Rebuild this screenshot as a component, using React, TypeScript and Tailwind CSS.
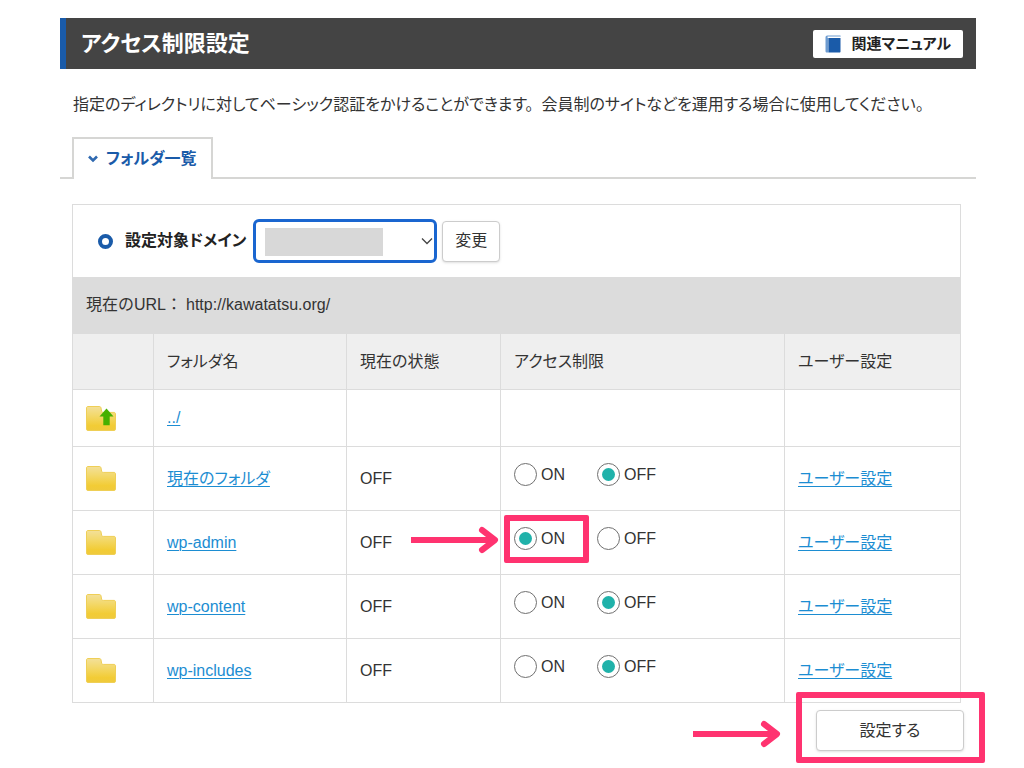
import { type FormEvent, type ReactNode, useState } from "react";
import clsx from "clsx";

type Access = "ON" | "OFF";

type Folder = {
  id: string;
  name: string;
  access: Access;
  highlighted?: boolean;
};

const folders: Folder[] = [
  { id: "current", name: "現在のフォルダ", access: "OFF" },
  { id: "wp-admin", name: "wp-admin", access: "ON", highlighted: true },
  { id: "wp-content", name: "wp-content", access: "OFF" },
  { id: "wp-includes", name: "wp-includes", access: "OFF" }
];

function FolderIcon({ up = false }: { up?: boolean }) {
  return (
    <svg viewBox="0 0 30 25" className="block h-[25px] w-[30px]" aria-hidden="true">
      <defs>
        <linearGradient id="folder-fill" x1="0" y1="0" x2="0" y2="1">
          <stop offset="0" stopColor="#f3e09a" />
          <stop offset="0.35" stopColor="#f3d96e" />
          <stop offset="0.8" stopColor="#f2cc35" />
          <stop offset="1" stopColor="#efca3c" />
        </linearGradient>
      </defs>
      <path
        d="M0.5 2C0.5 1 1 0.5 2 0.5H13.2C14.4 0.5 14.8 1 15 2L15.6 5C15.8 6 16.2 6.4 17.2 6.4H28C29 6.4 29.5 7 29.5 8V23C29.5 24 29 24.5 28 24.5H2C1 24.5 0.5 24 0.5 23Z"
        fill="url(#folder-fill)"
        stroke="#efcf56"
        strokeWidth="1"
      />
      {up ? <path d="M20.5 2.5L27.5 10.5H23.7V19.2H17.3V10.5H13.5Z" fill="#46b000" /> : null}
    </svg>
  );
}

function BookIcon() {
  return (
    <svg viewBox="0 0 16 18" className="h-[18px] w-4" aria-hidden="true">
      <path d="M2.5 0.5H15.5V2H3.2V17.5H2C1 17.5 0.5 17 0.5 16V2.5C0.5 1.2 1.2 0.5 2.5 0.5Z" fill="#6d9bd0" />
      <path d="M2.6 1.5H15.5V3H2.6Z" fill="#fff" />
      <path d="M3.4 3H15.5V16.5C15.5 17.2 15.2 17.5 14.5 17.5H3.4Z" fill="#1a5ba9" />
    </svg>
  );
}

function Arrow({ className }: { className?: string }) {
  return (
    <svg
      viewBox="0 0 88 28"
      className={clsx("pointer-events-none absolute h-7 w-[88px]", className)}
      fill="none"
      stroke="#ff3370"
      strokeWidth="6"
      strokeLinejoin="round"
      aria-hidden="true"
    >
      <path d="M0 14H82" />
      <path d="M71 4L84 14L71 24" strokeLinecap="round" />
    </svg>
  );
}

function Frame({ className }: { className?: string }) {
  return (
    <span
      className={clsx("pointer-events-none absolute rounded-xs border-6 border-[#ff3370]", className)}
    />
  );
}

function TextLink({ children }: { children: ReactNode }) {
  return (
    <a href="#" className="text-[#1c8dd2] underline decoration-1 underline-offset-2">
      {children}
    </a>
  );
}

type AccessRadioProps = {
  folderId: string;
  value: Access;
  checked: boolean;
  onChange: (value: Access) => void;
};

function AccessRadio({ folderId, value, checked, onChange }: AccessRadioProps) {
  return (
    <label className="flex items-center gap-1">
      <input
        type="radio"
        name={folderId}
        value={value}
        checked={checked}
        onChange={() => onChange(value)}
        className="size-[23px] appearance-none rounded-full border border-[#707070] bg-white bg-clip-content p-1 checked:bg-[#20b2aa]"
      />
      {value}
    </label>
  );
}

const cell = "border border-[#dcdcdc] px-[13px] text-left font-normal";

export default function App() {
  const [access, setAccess] = useState<Record<string, Access>>(
    Object.fromEntries(folders.map((folder) => [folder.id, folder.access]))
  );

  function handleSubmit(event: FormEvent<HTMLFormElement>) {
    event.preventDefault();
  }

  return (
    <main className="bg-white pt-[18px] pr-12 pb-4 pl-[60px] font-['Liberation_Sans','Noto_Sans_CJK_JP',sans-serif] text-base leading-6 text-[#333] [font-feature-settings:'palt']">
      <header className="flex h-[51px] items-center justify-between border-l-6 border-[#1a5ba9] bg-[#444] pr-[13px] pl-[15px]">
        <h1 className="text-[22px] font-bold text-white">アクセス制限設定</h1>
        <a
          href="#"
          className="flex h-7 items-center gap-[10px] rounded-xs bg-white px-3 text-[15px] font-bold text-[#222]"
        >
          <BookIcon />
          関連マニュアル
        </a>
      </header>

      <p className="mt-6 ml-[13px]">
        <span className="mr-2">指定のディレクトリに対してベーシック認証をかけることができます。</span>
        <span>会員制のサイトなどを運用する場合に使用してください。</span>
      </p>

      <div className="mt-5 flex h-[42px]">
        <div className="w-3 border-b-2 border-[#d6d6d4]" />
        <button
          type="button"
          className="flex items-center gap-2 border-2 border-b-0 border-[#d6d6d4] px-[14px] font-bold text-[#1a5ba9]"
        >
          <svg viewBox="0 0 10 8" className="h-2 w-[10px]" fill="none" aria-hidden="true">
            <path d="M1 1.5L5 5.5L9 1.5" stroke="#2f69b0" strokeWidth="2.6" />
          </svg>
          フォルダ一覧
        </button>
        <div className="flex-1 border-b-2 border-[#d6d6d4]" />
      </div>

      <form onSubmit={handleSubmit}>
        <div className="mt-[25px] mr-[15px] ml-3">
          <div className="flex h-[73px] items-center border border-b-0 border-[#dcdcdc] pl-[25px]">
            <span className="mr-3 size-[15px] rounded-full border-4 border-[#1a5ba9]" />
            <label htmlFor="domain" className="mr-[7px] font-bold text-[#222]">
              設定対象ドメイン
            </label>
            <div className="relative mr-[5px]">
              <select
                id="domain"
                className="block h-11 w-[184px] appearance-none rounded-md border-3 border-[#1a66d0] bg-white px-3"
              >
                <option></option>
              </select>
              <span className="pointer-events-none absolute top-[9px] left-3 h-7 w-[118px] bg-[#d8d8d8]" />
              <svg
                viewBox="0 0 12 8"
                className="pointer-events-none absolute top-[18px] right-1 h-2 w-3"
                fill="none"
                aria-hidden="true"
              >
                <path d="M1 1.5L6 6.5L11 1.5" stroke="#444" strokeWidth="1.3" />
              </svg>
            </div>
            <button
              type="button"
              className="h-[41px] rounded-sm border border-[#ccc] bg-white px-3 shadow"
            >
              変更
            </button>
          </div>

          <p className="flex h-14 items-center bg-[#dcdcdc] px-[14px] [font-feature-settings:normal]">
            現在のURL：<span className="ml-1">http://kawatatsu.org/</span>
          </p>

          <table className="w-full table-fixed border-collapse">
            <colgroup>
              <col className="w-[81px]" />
              <col className="w-[193px]" />
              <col className="w-[154px]" />
              <col className="w-[284px]" />
              <col />
            </colgroup>
            <thead>
              <tr className="h-14 bg-[#efefef]">
                <td className={cell} />
                <th className={cell}>フォルダ名</th>
                <th className={cell}>現在の状態</th>
                <th className={cell}>アクセス制限</th>
                <th className={cell}>ユーザー設定</th>
              </tr>
            </thead>
            <tbody>
              <tr className="h-[57px]">
                <td className={cell}>
                  <FolderIcon up />
                </td>
                <td className={cell}>
                  <TextLink>../</TextLink>
                </td>
                <td className={cell} />
                <td className={cell} />
                <td className={cell} />
              </tr>
              {folders.map((folder) => (
                <tr key={folder.id} className="h-16">
                  <td className={cell}>
                    <FolderIcon />
                  </td>
                  <td className={cell}>
                    <TextLink>{folder.name}</TextLink>
                  </td>
                  <td className={cell}>OFF</td>
                  <td className={cell}>
                    <div className="mb-2 flex gap-8">
                      <div className="relative">
                        <AccessRadio
                          folderId={folder.id}
                          value="ON"
                          checked={access[folder.id] === "ON"}
                          onChange={(value) => setAccess({ ...access, [folder.id]: value })}
                        />
                        {folder.highlighted ? (
                          <>
                            <Frame className="-top-3 -right-6 -bottom-3 -left-[10px]" />
                            <Arrow className="-top-px right-full mr-[15px]" />
                          </>
                        ) : null}
                      </div>
                      <AccessRadio
                        folderId={folder.id}
                        value="OFF"
                        checked={access[folder.id] === "OFF"}
                        onChange={(value) => setAccess({ ...access, [folder.id]: value })}
                      />
                    </div>
                  </td>
                  <td className={cell}>
                    <TextLink>ユーザー設定</TextLink>
                  </td>
                </tr>
              ))}
            </tbody>
          </table>
        </div>

        <div className="mt-[7px] mr-3 flex justify-end">
          <div className="relative">
            <button
              type="submit"
              className="block h-[41px] w-[148px] rounded-sm border border-[#ccc] bg-white shadow"
            >
              設定する
            </button>
            <Frame className="-top-[18px] -right-[21px] -bottom-3 -left-5" />
            <Arrow className="top-[10px] right-full mr-[35px]" />
          </div>
        </div>
      </form>
    </main>
  );
}
